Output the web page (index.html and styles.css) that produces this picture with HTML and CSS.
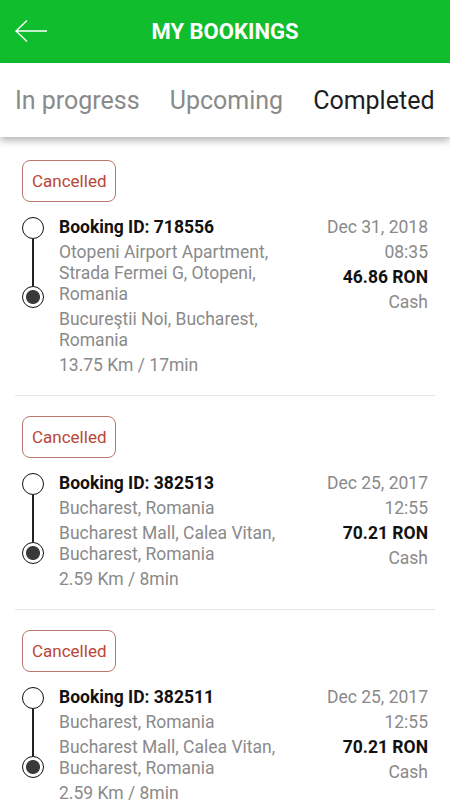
FILE: index.html
```html
<!DOCTYPE html>
<html lang="en">
<head>
    <meta charset="UTF-8">
    <meta name="viewport" content="width=device-width, initial-scale=1.0">
    <title>My Bookings</title>
    <link rel="stylesheet" href="styles.css">
</head>
<body>
    <header class="topbar">
        <button class="back" aria-label="Back">
            <svg width="34" height="24" viewBox="0 0 34 24" fill="none" stroke="#fff" stroke-width="1.4">
                <path d="M33 12H2M13 1.5L2 12l11 10.5"/>
            </svg>
        </button>
        <h1>MY BOOKINGS</h1>
    </header>

    <nav class="tabs">
        <span class="tab">In progress</span>
        <span class="tab">Upcoming</span>
        <span class="tab active">Completed</span>
    </nav>

    <main class="list">
        <div class="booking">
            <span class="badge">Cancelled</span>
            <div class="row">
                <div class="timeline">
                    <span class="dot"></span>
                    <span class="line"></span>
                    <span class="dot filled"></span>
                </div>
                <div class="info">
                    <div class="id">Booking ID: 718556</div>
                    <div class="addr first">Otopeni Airport Apartment, Strada Fermei G, Otopeni, Romania</div>
                    <div class="addr">Bucureştii Noi, Bucharest, Romania</div>
                    <div class="addr">13.75 Km / 17min</div>
                </div>
                <div class="meta">
                    <div>Dec 31, 2018</div>
                    <div>08:35</div>
                    <div class="price">46.86 RON</div>
                    <div>Cash</div>
                </div>
            </div>
        </div>

        <div class="booking">
            <span class="badge">Cancelled</span>
            <div class="row">
                <div class="timeline">
                    <span class="dot"></span>
                    <span class="line"></span>
                    <span class="dot filled"></span>
                </div>
                <div class="info">
                    <div class="id">Booking ID: 382513</div>
                    <div class="addr first">Bucharest, Romania</div>
                    <div class="addr">Bucharest Mall, Calea Vitan, Bucharest, Romania</div>
                    <div class="addr">2.59 Km / 8min</div>
                </div>
                <div class="meta">
                    <div>Dec 25, 2017</div>
                    <div>12:55</div>
                    <div class="price">70.21 RON</div>
                    <div>Cash</div>
                </div>
            </div>
        </div>

        <div class="booking">
            <span class="badge">Cancelled</span>
            <div class="row">
                <div class="timeline">
                    <span class="dot"></span>
                    <span class="line"></span>
                    <span class="dot filled"></span>
                </div>
                <div class="info">
                    <div class="id">Booking ID: 382511</div>
                    <div class="addr first">Bucharest, Romania</div>
                    <div class="addr">Bucharest Mall, Calea Vitan, Bucharest, Romania</div>
                    <div class="addr">2.59 Km / 8min</div>
                </div>
                <div class="meta">
                    <div>Dec 25, 2017</div>
                    <div>12:55</div>
                    <div class="price">70.21 RON</div>
                    <div>Cash</div>
                </div>
            </div>
        </div>
    </main>
</body>
</html>
```

FILE: styles.css
```css
body {
    margin: 0;
    font-family: Roboto, "Liberation Sans", sans-serif;
    background: #fff;
    height: 800px;
    overflow: hidden;
}
.topbar {
    background: #10bd2d;
    height: 63px;
    display: flex;
    align-items: center;
    justify-content: center;
    position: relative;
}
.back {
    position: absolute;
    left: 14px;
    top: 19px;
    background: none;
    border: none;
    padding: 0;
    line-height: 0;
}
.topbar h1 {
    margin: 0;
    color: #fff;
    font-size: 22px;
    font-weight: 700;
}
.tabs {
    height: 74px;
    display: flex;
    align-items: center;
    gap: 30px;
    padding-left: 15px;
    background: #fff;
    box-shadow: 0 4px 7px rgba(0, 0, 0, 0.28);
    position: relative;
    z-index: 1;
}
.tab {
    font-size: 25px;
    color: #8a8a8a;
}
.tab.active {
    color: #1e1e1e;
}
.list {
    padding: 3px 15px 0;
}
.booking {
    padding: 20px 7px 19px;
    border-bottom: 1px solid #e6e6e6;
}
.badge {
    display: inline-flex;
    align-items: center;
    height: 42px;
    box-sizing: border-box;
    padding: 0 9px;
    border: 1px solid #b9776d;
    border-radius: 8px;
    color: #bb4636;
    font-size: 17px;
}
.row {
    display: flex;
    margin-top: 13px;
    font-size: 17.5px;
}
.timeline {
    width: 22px;
    flex: none;
    display: flex;
    flex-direction: column;
    align-items: center;
    margin-top: 2px;
    margin-right: 15px;
}
.dot {
    width: 22px;
    height: 22px;
    box-sizing: border-box;
    border: 1.5px solid #111;
    border-radius: 50%;
    background: #fff;
}
.dot.filled {
    background: radial-gradient(circle, #3a3a3a 0 6.5px, #fff 7.5px);
}
.line {
    width: 1.5px;
    height: 47px;
    background: #222;
}
.info {
    flex: 1;
    min-width: 0;
}
.id {
    font-weight: 700;
    color: #111;
    line-height: 25px;
}
.addr {
    color: #8a8a8a;
    line-height: 21px;
    margin-top: 4px;
    padding-right: 8px;
}
.addr.first {
    margin-top: 2px;
}
.meta {
    flex: none;
    text-align: right;
    color: #8a8a8a;
    line-height: 25px;
}
.price {
    font-weight: 700;
    color: #111;
}
```
